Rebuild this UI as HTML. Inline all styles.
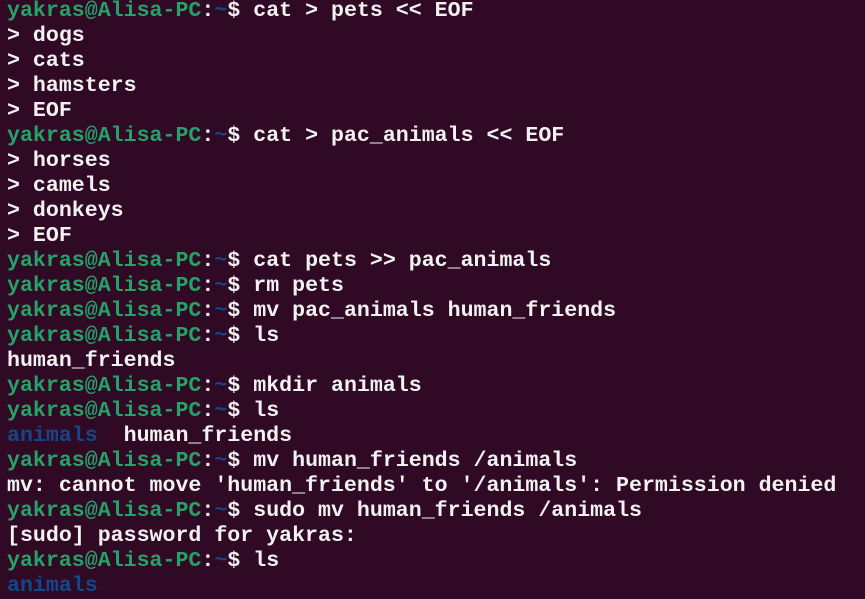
<!DOCTYPE html><html><head><style>
body{margin:0;background:#300a24;width:865px;height:598px;overflow:hidden}
pre{margin:0;position:absolute;left:7px;top:-1px;font:bold 21.6px/25px "Liberation Mono",monospace;color:#f2f2f2;letter-spacing:0}
.g{color:#26a269}.b{color:#12488b}
</style></head><body><pre><span class="g">yakras@Alisa-PC</span>:<span class="b">~</span>$ cat > pets << EOF
> dogs
> cats
> hamsters
> EOF
<span class="g">yakras@Alisa-PC</span>:<span class="b">~</span>$ cat > pac_animals << EOF
> horses
> camels
> donkeys
> EOF
<span class="g">yakras@Alisa-PC</span>:<span class="b">~</span>$ cat pets >> pac_animals
<span class="g">yakras@Alisa-PC</span>:<span class="b">~</span>$ rm pets
<span class="g">yakras@Alisa-PC</span>:<span class="b">~</span>$ mv pac_animals human_friends
<span class="g">yakras@Alisa-PC</span>:<span class="b">~</span>$ ls
human_friends
<span class="g">yakras@Alisa-PC</span>:<span class="b">~</span>$ mkdir animals
<span class="g">yakras@Alisa-PC</span>:<span class="b">~</span>$ ls
<span class="b">animals</span>  human_friends
<span class="g">yakras@Alisa-PC</span>:<span class="b">~</span>$ mv human_friends /animals
mv: cannot move 'human_friends' to '/animals': Permission denied
<span class="g">yakras@Alisa-PC</span>:<span class="b">~</span>$ sudo mv human_friends /animals
[sudo] password for yakras:
<span class="g">yakras@Alisa-PC</span>:<span class="b">~</span>$ ls
<span class="b">animals</span></pre></body></html>
